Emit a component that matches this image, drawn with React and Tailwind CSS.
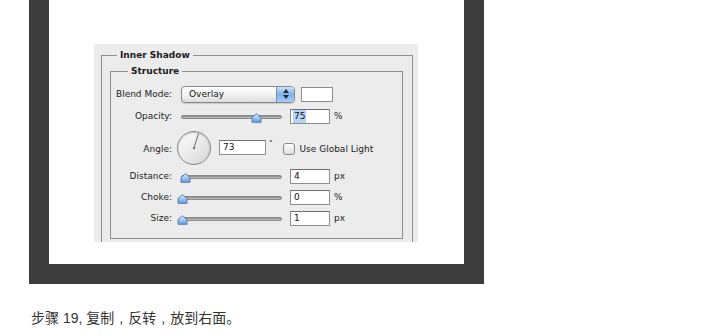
import React from "react";

const font = "font-['DejaVu_Sans','Liberation_Sans',sans-serif]";

const Thumb = ({ left }) => (
  <svg
    className="absolute top-[-3px]"
    style={{ left }}
    width="11"
    height="10"
    viewBox="0 0 11 10"
  >
    <defs>
      <linearGradient id="thumbFill" x1="0" y1="0" x2="0" y2="1">
        <stop offset="0" stopColor="#e4f1ff" />
        <stop offset="0.5" stopColor="#9cc6f2" />
        <stop offset="1" stopColor="#5e9be0" />
      </linearGradient>
    </defs>
    <path
      d="M1 4.5 L5.5 0.7 L10 4.5 V9.3 H1 Z"
      fill="url(#thumbFill)"
      stroke="#4f74a3"
      strokeWidth="0.9"
      strokeLinejoin="round"
    />
  </svg>
);

const Slider = ({ thumb }) => (
  <div className="relative w-[101px] h-[4px] rounded-full bg-gradient-to-b from-[#7c7c7c] via-[#a9a9a9] to-[#cfcfcf] border border-[#8a8a8a]">
    <Thumb left={thumb} />
  </div>
);

const Field = ({ value, w = "w-[40px]", selected }) => (
  <div
    className={`${w} h-[15px] bg-white border border-[#8d8d8d] border-t-[#6f6f6f] flex items-center pl-[3px] text-[9px] leading-none text-[#111]`}
  >
    <span className={selected ? "bg-[#b3d3fb] py-[2px] px-[1px] -ml-[1px]" : ""}>{value}</span>
  </div>
);

const Label = ({ children, extra = "" }) => (
  <div className={`w-[62px] text-right pr-[1px] text-[9px] leading-none text-[#1c1c1c] ${extra}`}>{children}</div>
);

const SliderRow = ({ label, value, unit, thumb, mt, selected }) => (
  <div className={`flex items-center h-[15px] ${mt}`}>
    <Label>{label}</Label>
    <div className="ml-[8px]">
      <Slider thumb={thumb} />
    </div>
    <div className="ml-[8px]">
      <Field value={value} selected={selected} />
    </div>
    <span className="ml-[4px] text-[9px] leading-none text-[#1c1c1c]">{unit}</span>
  </div>
);

const Comma = () => <span className="inline-block w-[14px] text-center">,</span>;

export default function App() {
  return (
    <div className="w-[720px] h-[336px] bg-white pl-[29px]">
      <div className="w-[455px] bg-[#3d3d3d] px-[20px] pb-[20px]">
        <div className="h-[264px] bg-white pt-[44px] pl-[45px]">
          <div className={`w-[324px] h-[198px] bg-[#ececec] overflow-hidden pt-[11px] pl-[7px] pr-[5px] ${font}`}>
            <div className="border border-[#8f8f8f] pb-[12px]">
              <span className="block w-fit -mt-[6px] ml-[15px] px-[3px] bg-[#ececec] text-[9px] leading-[11px] font-bold text-[#1a1a1a]">
                Inner Shadow
              </span>
              <div className="mt-[10px] ml-[8px] mr-[9px] border border-[#8f8f8f] h-[168px]">
                <span className="block w-fit -mt-[6px] ml-[17px] px-[3px] bg-[#ececec] text-[9px] leading-[11px] font-bold text-[#1a1a1a]">
                  Structure
                </span>

                <div className="flex items-center h-[18px] mt-[8px]">
                  <Label>Blend Mode:</Label>
                  <div className="ml-[8px] w-[114px] h-[17px] rounded-[4px] border border-[#8a8a8a] bg-gradient-to-b from-white via-[#f4f4f4] to-[#dcdcdc] flex items-center overflow-hidden shadow-[0_1px_1px_rgba(0,0,0,0.15)]">
                    <span className="flex-1 pl-[7px] text-[9px] leading-none text-[#111]">Overlay</span>
                    <div className="w-[18px] h-full border-l border-[#6f8fb8] bg-gradient-to-b from-[#cfe3fb] via-[#7fb0ea] to-[#a9cdf6] flex flex-col items-center justify-center gap-[2px]">
                      <svg width="6" height="4" viewBox="0 0 6 4">
                        <path d="M0 4 L3 0 L6 4 Z" fill="#1c2a3c" />
                      </svg>
                      <svg width="6" height="4" viewBox="0 0 6 4">
                        <path d="M0 0 L3 4 L6 0 Z" fill="#1c2a3c" />
                      </svg>
                    </div>
                  </div>
                  <div className="ml-[6px] w-[32px] h-[15px] bg-white border border-[#8d8d8d]" />
                </div>

                <SliderRow label="Opacity:" value="75" unit="%" thumb={69} mt="mt-[6px]" selected />

                <div className="flex items-start h-[34px] mt-[6px]">
                  <Label extra="mt-[15px]">Angle:</Label>
                  <div className="ml-[4px] mt-[1px] w-[34px] h-[34px] rounded-full border border-[#8a8a8a] bg-gradient-to-br from-[#fbfbfb] via-[#ececec] to-[#d2d2d2] shadow-[inset_0_1px_2px_rgba(0,0,0,0.2)]">
                    <svg width="32" height="32" viewBox="0 0 32 32">
                      <line x1="16" y1="16" x2="20.5" y2="1.5" stroke="#6d6d6d" strokeWidth="1" />
                      <circle cx="16" cy="16" r="1.2" fill="#6d6d6d" />
                    </svg>
                  </div>
                  <div className="ml-[8px] mt-[10px]">
                    <Field value="73" w="w-[47px]" />
                  </div>
                  <span className="ml-[3px] mt-[10px] text-[7px] leading-none text-[#333]">°</span>
                  <div className="ml-[10px] mt-[13px] w-[12px] h-[12px] rounded-[3px] border border-[#8a8a8a] bg-gradient-to-b from-white to-[#dedede]" />
                  <span className="ml-[5px] mt-[15px] text-[9px] leading-none text-[#1c1c1c]">Use Global Light</span>
                </div>

                <SliderRow label="Distance:" value="4" unit="px" thumb={-2} mt="mt-[5px]" />
                <SliderRow label="Choke:" value="0" unit="%" thumb={-5} mt="mt-[6px]" />
                <SliderRow label="Size:" value="1" unit="px" thumb={-5} mt="mt-[6px]" />
              </div>
            </div>
          </div>
        </div>
      </div>
      <p className="pl-[2px] mt-[24px] text-[14px] leading-[20px] text-[#333] font-['Liberation_Sans','Noto_Sans_CJK_SC',sans-serif]">
        步骤 19, 复制<Comma />反转<Comma />放到右面。
      </p>
    </div>
  );
}
